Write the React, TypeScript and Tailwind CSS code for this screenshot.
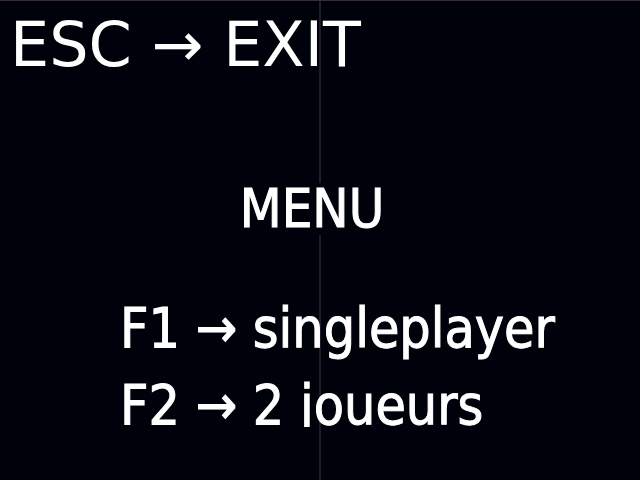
export default function App() {
  return (
    <main className="relative flex min-h-screen flex-col overflow-hidden border-t border-[#3f263f] bg-[#00020b] text-white">
      <div className="absolute inset-y-0 left-1/2 w-0.5 -translate-x-1/2 bg-[#241a26]" />
      <p className="relative mt-2 px-2.5 font-['DejaVu_Sans',sans-serif] text-[62px] leading-[72px] whitespace-nowrap">ESC → EXIT</p>
      <h1 className="relative mt-[102px] self-center bg-[#00020b] pr-4 font-['DejaVu_Sans_Condensed','DejaVu_Sans',sans-serif] text-[54px] leading-[52px] [-webkit-text-stroke:1px_white]">MENU</h1>
      <ul className="relative mt-[55px] pl-[120px] font-['DejaVu_Sans_Condensed','DejaVu_Sans',sans-serif] text-[55px] leading-[77px] whitespace-nowrap [-webkit-text-stroke:1px_white]">
        <li>F1 → singleplayer</li>
        <li className="h-[60px] overflow-hidden">F2 → 2 joueurs</li>
      </ul>
    </main>
  );
}
